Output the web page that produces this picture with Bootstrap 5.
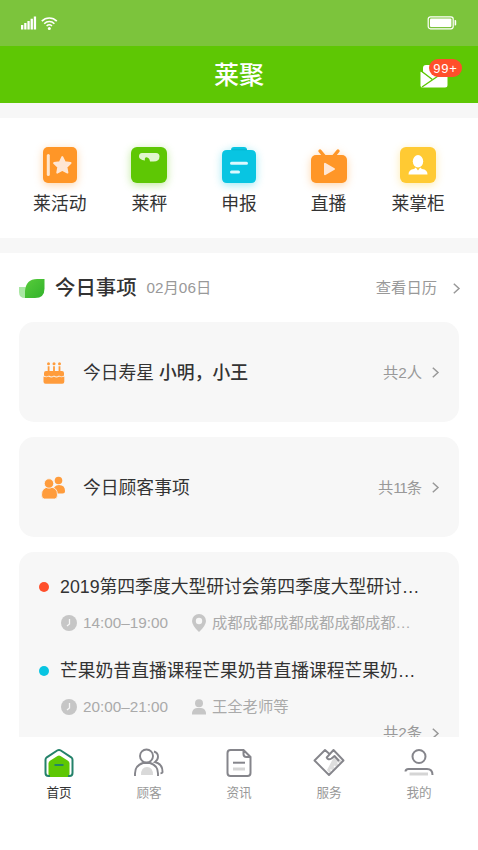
<!DOCTYPE html>
<html lang="zh-CN">
<head>
<meta charset="utf-8">
<meta name="viewport" content="width=device-width, initial-scale=1">
<title>莱聚</title>
<link href="https://cdn.jsdelivr.net/npm/bootstrap@5.3.0/dist/css/bootstrap.min.css" rel="stylesheet">
<style>
body{font-family:"Liberation Sans","Noto Sans CJK SC",sans-serif;color:#333;background:#fff;overflow:hidden}
svg{display:block;flex:none;overflow:visible}
.app{height:850px;overflow:hidden}
.status{height:46px;background:#7cc43c;padding:0 21px}
.topbar{height:57px;background:#5ec704}
.topbar h1{font-size:25px;line-height:59px;font-weight:500}
.mail{position:absolute;right:30px;top:18px}
.count{position:absolute;left:429px;top:13px;width:33px;height:18px;line-height:19px;border-radius:9px;background:#ff4f2b;font-size:13px;letter-spacing:.8px}
.gap-strip{height:15px;background:#f7f7f7}
.shortcuts{height:120px;padding:28px 15px 0}
.shortcuts span{font-size:17.8px;line-height:24px;margin-top:8px}
.glow-o{filter:drop-shadow(0 2px 4px #ff962766)}
.glow-g{filter:drop-shadow(0 2px 4px #5ec70466)}
.glow-b{filter:drop-shadow(0 2px 4px #08c5e266)}
.glow-y{filter:drop-shadow(0 2px 4px #ffca3366)}
.heading{height:69px;padding:1px 19px 0}
.heading h2{font-size:20.4px;line-height:30px;font-weight:500;margin-left:10px}
.t15{font-size:15.3px;line-height:22px}
.t18{font-size:17.8px;line-height:26px}
.soft{color:#999}
.pale{color:#aaa}
.panel{background:#f7f7f7;border-radius:15px;margin:0 19px 15px;height:100px;padding:1px 20px 0}
.panel b{font-weight:500}
.panel-text{margin-left:15px}
.tight{letter-spacing:-1.2px}
.feed{height:250px;padding-top:22px;margin-bottom:0}
.content{height:484px;overflow:hidden}
.dot{width:10px;height:10px;border-radius:50%;margin-right:11px}
.dot-red{background:#ff4f2b}
.dot-cyan{background:#08c5e2}
.meta-row{padding-left:22px;margin-top:12px;height:22px}
.second{margin-top:24px}
.stamp{width:87px;margin-left:6px;margin-right:22px}
.place{margin-left:6px}
.more{margin-top:4px}
.tabs{height:113px;padding:11px 14px 0}
.tabs span{font-size:12.6px;line-height:18px;margin-top:6px}
.tabs .on{color:#333}
</style>
<script src="https://cdn.jsdelivr.net/npm/bootstrap@5.3.0/dist/js/bootstrap.bundle.min.js"></script>
</head>
<body>
<div class="app d-flex flex-column bg-white">
  <div class="status d-flex align-items-center">
    <svg width="16" height="14" fill="#fff"><path d="M0 9h2.300v4.500H0zM3.200 7h2.300v6.500H3.200zM6.400 5h2.300v8.500H6.400zM9.600 2.800h2.300v10.700H9.600zM12.800.500h2.300v13h-2.300z"/></svg>
    <svg class="ms-1" width="17" height="14" viewBox="0 0 17 14" fill="none" stroke="#fff" stroke-width="1.6"><path d="M.8 5.100a10.500 10.500 0 0 1 15 0M3.200 7.700a7.100 7.100 0 0 1 10.200 0M5.600 10a4 4 0 0 1 5.400 0"/><circle cx="8.300" cy="12.500" r="1.500" fill="#fff" stroke="none"/></svg>
    <svg class="ms-auto" width="30" height="14" viewBox="0 0 30 14"><rect x="1.200" y=".8" width="25" height="12" rx="2.200" fill="none" stroke="#fff" stroke-width="1.200"/><rect x="3" y="2.600" width="21.400" height="8.400" rx="1" fill="#fff"/><path d="M27.600 4h.6q1 0 1 1v3.500q0 1-1 1h-.6z" fill="#fff"/></svg>
  </div>
  <header class="topbar position-relative text-center text-white">
    <h1 class="m-0">莱聚</h1>
    <svg class="mail" width="28" height="24" viewBox="0 0 28 24"><path d="M3 9V4q0-3 3-3h19v9l-11 6z" fill="#fff"/><path d="M1 7.500l11 7.500L27.500 8v13q0 2.500-2.500 2.500H2.500Q1 23.500.500 22V8z" fill="#fff"/><path d="M0 6l12 9.200M2 23L21 10" stroke="#5ec704" stroke-width="1.400"/></svg>
    <span class="count">99+</span>
  </header>
  <div class="gap-strip"></div>
  <nav class="shortcuts d-flex">
    <div class="col d-flex flex-column align-items-center"><svg class="glow-o" width="36" height="38" viewBox="0 0 36 38"><rect x="1" y="1" width="34" height="36" rx="5" fill="#ff9627"/><rect x="4.800" y="8" width="3" height="22" rx="1.500" fill="#ffe6cc"/><path d="M20.300 11l2.600 5.200 5.700.8-4.100 4 1 5.700-5.200-2.700-5.100 2.700 1-5.700-4.200-4 5.800-.8z" fill="#ffe6d3" stroke="#ffe6d3" stroke-width="1.800" stroke-linejoin="round"/></svg><span>莱活动</span></div>
    <div class="col d-flex flex-column align-items-center"><svg class="glow-g" width="36" height="38" viewBox="0 0 36 38"><rect y="1" width="36" height="36" rx="6" fill="#5ec704"/><path d="M11 7h14q3.500 0 3.500 3.500 0 5-6 5h-3.500q-.5-4-3.500-4.300-2.300.3-1.500 3.300-6-.8-6-4Q8 7 11 7z" fill="#e1f6cf"/></svg><span>莱秤</span></div>
    <div class="col d-flex flex-column align-items-center"><svg class="glow-b" width="36" height="38" viewBox="0 0 36 38"><path d="M6 4h4q0-3 3-3h10q3 0 3 3h4q5 0 5 5v23q0 5-5 5H6q-5 0-5-5V9q0-5 5-5z" fill="#08c5e2"/><path d="M11 3.800h15" stroke="#04b4d1" stroke-width="1"/><path d="M10.500 17.300h15M10.500 26h7" stroke="#dcf9ff" stroke-width="3" stroke-linecap="round"/></svg><span>申报</span></div>
    <div class="col d-flex flex-column align-items-center"><svg class="glow-o" width="38" height="38" viewBox="0 0 38 38"><path d="M10 5l5 6M28 5l-5 6" stroke="#ff9627" stroke-width="3.400" stroke-linecap="round"/><rect x="1" y="9" width="36" height="28" rx="5" fill="#ff9627"/><path d="M15 17.800v10.400l9-5.200z" fill="#ffe6d3" stroke="#ffe6d3" stroke-width="2" stroke-linejoin="round"/></svg><span>直播</span></div>
    <div class="col d-flex flex-column align-items-center"><svg class="glow-y" width="36" height="38" viewBox="0 0 36 38"><rect y="1" width="36" height="36" rx="6" fill="#ffca33"/><ellipse cx="18" cy="15.300" rx="5.200" ry="6.200" fill="#fff"/><path d="M8.500 28.500q0-5 5.500-5.500l1.800-1.500 2.200 3 2.200-3 1.800 1.500q5.500.5 5.500 5.500z" fill="#fff"/></svg><span>莱掌柜</span></div>
  </nav>
  <div class="gap-strip"></div>
  <main class="content flex-shrink-0">
    <div class="heading d-flex align-items-center">
      <svg width="26" height="21" viewBox="0 0 26 21"><defs><linearGradient id="leaf" x2="1" y2="1"><stop stop-color="#58cc3b"/><stop offset="1" stop-color="#32b22b"/></linearGradient></defs><path d="M0 9h6q6 1 6 11H6q-6 0-6-6z" fill="#a9e7a3"/><path d="M25.500 1v9.500q0 9.500-9.500 9.500H6v-7Q7 1 18 1z" fill="url(#leaf)"/></svg>
      <h2 class="mb-0">今日事项</h2>
      <span class="t15 soft" style="margin-left:10px">02月06日</span>
      <span class="t15 soft ms-auto">查看日历</span>
      <svg class="ms-3" width="6" height="11" fill="none" stroke="#999" stroke-width="1.500"><path d="M.8.8L6 5.500.8 10.200"/></svg>
    </div>
    <section class="panel d-flex align-items-center">
      <svg width="29" height="24" viewBox="0 0 29 24"><g fill="#ff9c3c"><circle cx="9.500" cy="2.800" r="1.500"/><circle cx="15" cy="2.800" r="1.500"/><circle cx="20.500" cy="2.800" r="1.500"/><path d="M8.700 5.200h1.800V10H8.700zM14.100 5.200h1.800V10h-1.800zM19.600 5.200h1.800V10h-1.800zM7 10h16q2 0 2 2v2.500q-2.500 2-5 0-2.500 2-5 0-2.500 2-5 0-2.500 2-5 0V12q0-2 2-2z"/><path d="M4.500 15.500q3 1.500 5.200 0 2.600 2 5.200 0 2.600 2 5.200 0 2.200 1.500 5.200 0v5.300q0 2-2 2H6.500q-2 0-2-2z"/></g></svg>
      <div class="t18 panel-text">今日寿星 <b>小明，小王</b></div>
      <span class="t15 soft ms-auto">共2人</span>
      <svg class="ms-2" width="9" height="11" fill="none" stroke="#999" stroke-width="1.500"><path d="M2.800.8L8 5.500 2.800 10.200"/></svg>
    </section>
    <section class="panel d-flex align-items-center">
      <svg width="29" height="24" viewBox="0 0 29 24" fill="#ff9c3c"><circle cx="19.500" cy="4.500" r="3.800"/><path d="M14 16.500q0-7.500 6-7.500 6 0 6 6 0 2.500-2.500 2.500H17z"/><path d="M2.500 19q0-8 8-8t8 8q0 4-3 4h-10q-3 0-3-4z" stroke="#f7f7f7" stroke-width=".8"/><circle cx="10" cy="7.500" r="4.700" stroke="#f7f7f7" stroke-width=".8"/></svg>
      <div class="t18 panel-text">今日顾客事项</div>
      <span class="t15 soft ms-auto">共<span class="tight">11</span>条</span>
      <svg class="ms-2" width="9" height="11" fill="none" stroke="#999" stroke-width="1.500"><path d="M2.800.8L8 5.500 2.800 10.200"/></svg>
    </section>
    <section class="panel feed">
      <div class="d-flex align-items-center t18 text-nowrap"><i class="dot dot-red"></i>2019第四季度大型研讨会第四季度大型研讨…</div>
      <div class="meta-row d-flex align-items-center t15 pale text-nowrap">
        <svg width="16" height="16"><circle cx="8" cy="8" r="8" fill="#c6c6c6"/><path d="M8.500 4v5L6 11" fill="none" stroke="#f7f7f7" stroke-width="1.300"/></svg>
        <span class="stamp">14:00–19:00</span>
        <svg width="14" height="18" viewBox="0 0 14 18"><path d="M7 0a7 7 0 0 1 7 7q0 4.500-7 11Q0 11.500 0 7a7 7 0 0 1 7-7z" fill="#c6c6c6"/><circle cx="7" cy="7" r="3.200" fill="#f7f7f7"/></svg>
        <span class="place">成都成都成都成都成都成都…</span>
      </div>
      <div class="second d-flex align-items-center t18 text-nowrap"><i class="dot dot-cyan"></i>芒果奶昔直播课程芒果奶昔直播课程芒果奶…</div>
      <div class="meta-row d-flex align-items-center t15 pale text-nowrap">
        <svg width="16" height="16"><circle cx="8" cy="8" r="8" fill="#c6c6c6"/><path d="M8.500 4v5L6 11" fill="none" stroke="#f7f7f7" stroke-width="1.300"/></svg>
        <span class="stamp">20:00–21:00</span>
        <svg width="14" height="16" viewBox="0 0 14 16" fill="#c6c6c6"><circle cx="7" cy="4.300" r="4"/><path d="M0 15.500q0-6.500 5-6.500h4q5 0 5 6.500z"/></svg>
        <span class="place">王全老师等</span>
      </div>
      <div class="more d-flex align-items-center justify-content-end t15 soft">共2条<svg class="ms-2" width="9" height="11" fill="none" stroke="#999" stroke-width="1.500"><path d="M2.800.8L8 5.500 2.800 10.200"/></svg></div>
    </section>
  </main>
  <nav class="tabs d-flex bg-white soft">
    <div class="col d-flex flex-column align-items-center on"><svg width="30" height="30" viewBox="0 0 30 30"><path d="M5.500 29q-1-1-1-3V15.500q0-1.500 1.500-2.700L13.500 8q1.500-1 3 0l7.500 4.800q1.500 1.200 1.500 2.700V26q0 2-1 3z" fill="#5ec704"/><path d="M6 28H4.500Q1.500 28 1.500 25V11.800q0-1.500 1.300-2.500L13.200 2.500q1.800-1.100 3.600 0l10.400 6.800q1.300 1 1.300 2.500V25q0 3-3 3H24" fill="none" stroke="#24826a" stroke-width="2"/><path d="M10.500 17h9" stroke="#24826a" stroke-width="2"/></svg><span>首页</span></div>
    <div class="col d-flex flex-column align-items-center"><svg width="30" height="30" viewBox="0 0 30 30" fill="none" stroke="#85858b" stroke-width="1.900"><path d="M7 27q0-8 6-8t6 8z" fill="#d9d9d9" stroke="none"/><circle cx="12.500" cy="8" r="6.500"/><path d="M1 28v-2.500q0-8 8-10.500h7q8 2.500 8 10.500V28M20 3.500q4 1.200 4 5.300 0 3-3 5.200 7.500 2 7.500 9.500V24q0 1.200-2 1.200"/></svg><span>顾客</span></div>
    <div class="col d-flex flex-column align-items-center"><svg width="30" height="30" viewBox="0 0 30 30" fill="none" stroke="#85858b" stroke-width="2"><path d="M19.500 2H6.500q-3 0-3 3v20q0 3 3 3h17q3 0 3-3V9zM19.500 2v4q0 3 3 3h4"/><path d="M9 14.700h12"/><path d="M9 21h12" stroke="#d5d5d5" stroke-width="3"/></svg><span>资讯</span></div>
    <div class="col d-flex flex-column align-items-center"><svg width="32" height="30" viewBox="0 0 32 30" fill="none" stroke="#85858b" stroke-width="1.900" stroke-linejoin="round"><path d="M21.500 8l7.500 5L16.500 25l-2.500-3z" fill="#dedede" stroke="none"/><path d="M17.500 21.500l3 3M21 18l3 3M24.500 14.500l3 3" stroke="#fff" stroke-width="1.300"/><path d="M16.500 6L12 2 1.500 12.500 16 27l14.500-14.500L20.500 2l-6.800 7.500q1.300 3 4.800 1L21.500 8l4.500 5"/></svg><span>服务</span></div>
    <div class="col d-flex flex-column align-items-center"><svg width="30" height="30" viewBox="0 0 30 30" fill="none" stroke="#85858b" stroke-width="2"><circle cx="15" cy="8.500" r="6.500"/><path d="M1.500 23.500q0-2.500 3-2.500h18.500q5.500 0 5.500 6"/><path d="M5.500 26H24" stroke="#d5d5d5" stroke-width="3"/></svg><span>我的</span></div>
  </nav>
</div>
</body>
</html>
